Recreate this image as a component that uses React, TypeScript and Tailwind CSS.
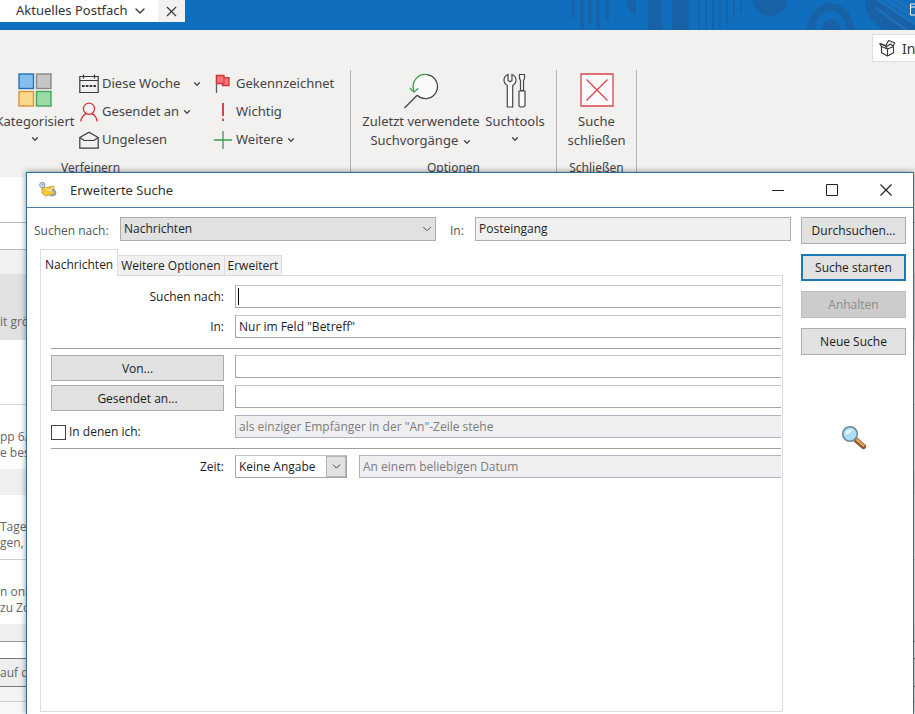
import { useState } from 'react'
import type { ReactNode } from 'react'
import { ChevronDown, X } from 'lucide-react'

/* ── Icons ─────────────────────────────────────── */

function CategoryIcon() {
  return (
    <svg width="34" height="34" viewBox="0 0 34 34" strokeWidth="1.4">
      <rect x="1" y="1" width="14.5" height="14.5" fill="#83beec" stroke="#2372ba" />
      <rect x="18.5" y="1" width="14.5" height="14.5" fill="#c8c6c4" stroke="#8a8886" />
      <rect x="1" y="18.5" width="14.5" height="14.5" fill="#fcd98a" stroke="#dc9434" />
      <rect x="18.5" y="18.5" width="14.5" height="14.5" fill="#9adba5" stroke="#47a35a" />
    </svg>
  )
}

function CalendarIcon() {
  return (
    <svg width="20" height="20" viewBox="0 0 20 20" fill="none" stroke="#3b3a39" strokeWidth="1.2">
      <path d="M.8 2.500h18.400v16H.8zM.8 6.500h18.400M4.500.5v4M15.500.5v4" />
      <path d="M3 12h14" strokeWidth="2" strokeDasharray="2.600 1.200" />
    </svg>
  )
}

function PersonIcon() {
  return (
    <svg width="20" height="20" viewBox="0 0 20 20" fill="none" stroke="#d13438" strokeWidth="1.3">
      <circle cx="10" cy="6.8" r="5.6" />
      <path d="M1.8 19.5c.6-4.2 3-6.7 5.4-7.8M18.2 19.5c-.6-4.2-3-6.7-5.4-7.8" />
    </svg>
  )
}

function EnvelopeIcon() {
  return (
    <svg width="20" height="20" viewBox="0 0 20 20" fill="none" stroke="#3b3a39" strokeWidth="1.2">
      <path d="M.8 7.500 10 2.300l9.200 5.200v10.700H.8z" />
      <path d="M.8 7.500 5 10.500h10l4.200-3" />
    </svg>
  )
}

function FlagIcon() {
  return (
    <svg width="18" height="20" viewBox="0 0 18 20" fill="none">
      <path d="M2.500 1v18" stroke="#605e5c" strokeWidth="1.3" />
      <path d="M2.500 1.500h7.500v2.200h5v7.800H8.500v-2h-6z" fill="#f8747a" stroke="#d13438" strokeWidth="1.300" />
      <path d="M10 3.700v5.800H8.500" stroke="#d13438" />
    </svg>
  )
}

function ImportantIcon() {
  return (
    <svg width="18" height="20" viewBox="0 0 18 20" fill="none" stroke="#d13438" strokeWidth="1.8">
      <path d="M9 1v13M9 16.800v2.200" />
    </svg>
  )
}

function PlusIcon() {
  return (
    <svg width="18" height="20" viewBox="0 0 18 20" fill="none" stroke="#3a9a4c" strokeWidth="1.300">
      <path d="M9 1v18M0 10h18" />
    </svg>
  )
}

function RecentSearchIcon() {
  return (
    <svg width="36" height="36" viewBox="0 0 36 36" fill="none" strokeWidth="1.300">
      <circle cx="22.500" cy="13.500" r="12" fill="#fafafa" />
      <path d="M14.200 22.200A12 12 0 1 0 24 1.600" stroke="#484644" />
      <path d="M25 1.700A12 12 0 0 0 10.900 17.500M7 15l3.900 4.200 4.300-3.700" stroke="#3a9a4c" />
      <path d="M14.200 22.200 1.500 35" stroke="#484644" />
    </svg>
  )
}

function ToolsIcon() {
  return (
    <svg width="24" height="36" viewBox="0 0 24 36" fill="#fafafa" stroke="#484644" strokeWidth="1.200">
      <path d="M5 1.500v6l2 1.300 2-1.300v-6c2.500 1 4 3.200 4 5.600 0 2.500-1.400 4.400-3.300 5.500V34H4.300V12.600C2.400 11.500 1 9.600 1 7.100c0-2.400 1.500-4.600 4-5.600z" />
      <path d="M16.500 1.500h5v4l-1 2v10h-3v-10l-1-2zM16 18h6v14.500c0 2-6 2-6 0z" />
    </svg>
  )
}

function CloseSearchIcon() {
  return (
    <svg width="34" height="34" viewBox="0 0 34 34" fill="#fafafa" stroke="#d9434c" strokeWidth="1.300">
      <path d="M1 1h32v32H1zM6.500 6.500l21 21M27.500 6.500l-21 21" />
    </svg>
  )
}

function BoxIcon() {
  return (
    <svg className="shrink-0" width="17" height="18" viewBox="0 0 17 18" fill="none" stroke="#3b3a39" strokeWidth="1.200" strokeLinejoin="round">
      <path d="M2.500 7.800v6L8.500 17l6-3.200V8M8.500 10v7M8.500 10 2.500 7.500M8.500 10l6-2.500M8.500 10 6.500 7 .8 4.500 2.500 7.800M6.500 7l3.200-5.500L15.800 4l-2.500 4" />
      <path d="M2 4.800l6 2.500L11.500 5l3 2.500" />
    </svg>
  )
}

function DialogIcon() {
  return (
    <svg width="18" height="16" viewBox="0 0 18 16">
      <path d="M3 4.500l3.500 1.300L15 4v8l-8.500 2L3 11z" fill="#f2c83c" stroke="#b98b1a" strokeWidth=".7" />
      <path d="M6.500 6 11 9l4-4.500" fill="none" stroke="#fff3b8" />
      <circle cx="3.300" cy="3" r="2.600" fill="#e4edf7" stroke="#6a86ad" strokeWidth=".9" />
      <path d="M3.300 1.500V3h1.200" fill="none" stroke="#40618f" strokeWidth=".7" />
      <path d="M11 13.500h2.500a2.800 2.800 0 1 0-.5-5.500" fill="none" stroke="#8197c4" strokeWidth="1.700" />
    </svg>
  )
}

function MagnifierIcon() {
  return (
    <svg width="26" height="26" viewBox="0 0 26 26">
      <path d="M14.500 14.500 22.500 21.500" stroke="#8d5428" strokeWidth="5.200" strokeLinecap="round" />
      <path d="M15.500 14.500 22.500 20.500" stroke="#dc9d5b" strokeWidth="2.600" strokeLinecap="round" />
      <circle cx="9" cy="9" r="7.300" fill="#a9def6" stroke="#6f879b" strokeWidth="1.600" />
      <path d="M4 9.500C4.500 5 8 3.500 12 4.500 10 8 7 9.500 4 9.500z" fill="#e3f6fe" />
    </svg>
  )
}

function TitlePattern() {
  return (
    <svg className="absolute inset-y-0 right-0" width="355" height="30" viewBox="0 0 355 30" fill="#1862a8">
      <path d="M12 0h3v18h-3zM20 0h4v30h-4zM28 0h4v24h-4zM36 0h4v30h-4zM45 0h4v20h-4zM66 0h10v16q-8-6-10-16zM88 0h14v30H88zM112 0h17v30h-17z" />
      <path d="M138 0h2v30h-2zM145 0h2v30h-2zM152 0h2v30h-2zM159 0h2v28h-2zM166 0h2v24h-2zM173 0h2v19h-2zM180 0h2v12h-2z" />
      <path d="M192 0h36q-4 16-18 16T192 0z" />
      <path d="M247 30a23.500 27 0 0 1 47 0h-8a15.500 19 0 0 0-31 0zM261 30a10 11 0 0 1 20 0z" />
      <path d="M305 0h11l39 26v4h-32q-18-12-18-30z" />
      <path d="M318 0l37 24M327 0l28 18M336 0l19 12M316 8l30 22" stroke="#2272ba" strokeWidth="2" />
      <path d="M355 4h-4.500v11H355M350.500 7H355" fill="none" stroke="#fff" />
    </svg>
  )
}

/* ── Ribbon ────────────────────────────────────── */

function Chevron({ className = '' }: { className?: string }) {
  return <ChevronDown size={10} strokeWidth={3} className={`inline-block shrink-0 ${className}`} />
}

interface RibbonItemProps {
  icon: ReactNode
  label: string
  menu?: boolean
  wide?: boolean
}

function RibbonItem({ icon, label, menu, wide }: RibbonItemProps) {
  return (
    <button className="flex h-7 items-center whitespace-nowrap">
      <span className="mr-[3px] flex w-5 justify-center">{icon}</span>
      {label}
      {menu && <Chevron className={wide ? 'ml-3' : 'ml-[3px]'} />}
    </button>
  )
}

function GroupLabel({ children }: { children: ReactNode }) {
  return <div className="mt-auto text-center text-[12px] leading-[18px]">{children}</div>
}

function Ribbon() {
  return (
    <div className="flex h-[147px] bg-[#f2f1f0] pt-10 font-['Noto_Sans','Open_Sans',sans-serif] text-[13px] text-[#444]">
      <div className="flex w-[350px] flex-col">
        <div className="flex">
          <button className="-ml-1 flex w-[78px] flex-col items-center pt-[3px] leading-[19px]">
            <CategoryIcon />
            <span className="mt-[5px]">Kategorisiert</span>
            <Chevron className="mt-[3px]" />
          </button>
          <div className="ml-[5px] w-[134px]">
            <RibbonItem icon={<CalendarIcon />} label="Diese Woche" menu wide />
            <RibbonItem icon={<PersonIcon />} label="Gesendet an" menu />
            <RibbonItem icon={<EnvelopeIcon />} label="Ungelesen" />
          </div>
          <div>
            <RibbonItem icon={<FlagIcon />} label="Gekennzeichnet" />
            <RibbonItem icon={<ImportantIcon />} label="Wichtig" />
            <RibbonItem icon={<PlusIcon />} label="Weitere" menu />
          </div>
        </div>
        <div className="mt-auto pl-[61px] text-[12px] leading-[18px]">Verfeinern</div>
      </div>
      <div className="flex w-[206px] flex-col border-l border-[#b5b3b1]">
        <div className="flex gap-1 pl-2.5 leading-[19px]">
          <button className="flex w-[120px] flex-col items-center whitespace-nowrap pt-[3px]">
            <RecentSearchIcon />
            <span className="mt-[3px]">Zuletzt verwendete</span>
            <span>Suchvorgänge <Chevron /></span>
          </button>
          <button className="flex w-[60px] flex-col items-center pt-[3px]">
            <ToolsIcon />
            <span className="mt-[3px]">Suchtools</span>
            <Chevron className="mt-[3px]" />
          </button>
        </div>
        <GroupLabel>Optionen</GroupLabel>
      </div>
      <div className="flex w-[81px] flex-col border-x border-[#b5b3b1]">
        <button className="flex flex-col items-center pt-[3px] leading-[19px]">
          <CloseSearchIcon />
          <span className="mt-[5px]">Suche</span>
          <span>schließen</span>
        </button>
        <GroupLabel>Schließen</GroupLabel>
      </div>
    </div>
  )
}

/* ── Mail list behind the dialog ───────────────── */

function MailList() {
  return (
    <div className="overflow-hidden whitespace-nowrap bg-white font-['Open_Sans','Noto_Sans',sans-serif] text-[12px] leading-4 text-[#666]">
      <div className="h-[46px] border-b border-[#bbb]" />
      <div className="h-[27px] border-b border-[#bbb]" />
      <div className="h-6 bg-[#f1f1f1]" />
      <div className="h-[66px] bg-[#e1e1e1] pt-10">it größ</div>
      <div className="h-[65px] border-b border-[#d5d5d5]" />
      <div className="h-16 pt-6">
        <p>pp 6/</p>
        <p>e best</p>
      </div>
      <div className="h-[26px] bg-[#efefef]" />
      <div className="h-[65px] border-b border-[#d0d0d0] pt-6">
        <p>Tagen</p>
        <p>gen,</p>
      </div>
      <div className="h-16 pt-6">
        <p>n onl</p>
        <p>zu Zo</p>
      </div>
      <div className="h-[18px] border-b border-[#999] bg-[#efefef]" />
      <div className="h-[17px] border-b border-[#777]" />
      <div className="h-7 border-b border-[#777] bg-[#eee] pt-1.5">auf d</div>
      <div className="h-[15px] border-b border-[#ccc] bg-[#f3f3f3]" />
    </div>
  )
}

/* ── Dialog ────────────────────────────────────── */

const FIELD = 'h-[23px] min-w-0 border-y border-l border-[#a5a5a5] border-t-[#c4c4c4] bg-white px-[3px] outline-none'
const FIELD_DISABLED =
  'h-[23px] min-w-0 appearance-none border-y border-l border-[#abb4c2] bg-[#efeff1] px-[3px] text-[#7c7c7c] opacity-100'
const BUTTON = 'border border-[#adadad] bg-[#e1e1e1] text-[#1a1a1a]'
const TABS = ['Nachrichten', 'Weitere Optionen', 'Erweitert']

function SearchPanel() {
  const [term, setTerm] = useState('')
  const row = 'grid h-[23px] grid-cols-[173px_1fr] gap-x-[11px]'

  return (
    <div className="flex flex-col gap-[7px]">
      <div className={row}>
        <label htmlFor="term" className="self-center text-right">Suchen nach:</label>
        <div className="relative flex">
          <input id="term" value={term} onChange={(e) => setTerm(e.target.value)} className={`${FIELD} w-full`} />
          {!term && <span className="pointer-events-none absolute inset-y-[3px] left-[3px] w-px bg-black" />}
        </div>
      </div>
      <div className={row}>
        <label htmlFor="scope" className="self-center text-right">In:</label>
        <select id="scope" className={`${FIELD} appearance-none`}>
          <option>Nur im Feld "Betreff"</option>
        </select>
      </div>
      <hr className="mt-[3px] -mb-px border-[#a0a0a0]" />
      <div className={row}>
        <button className={`${BUTTON} h-[26px] pt-0.5`}>Von...</button>
        <input aria-label="Von" className={FIELD} />
      </div>
      <div className={row}>
        <button className={`${BUTTON} h-[26px] pt-0.5`}>Gesendet an...</button>
        <input aria-label="Gesendet an" className={FIELD} />
      </div>
      <div className={row}>
        <label className="flex h-[34px] items-center gap-[3px]">
          <input type="checkbox" className="size-[15px] appearance-none border border-[#444] bg-white" />
          In denen ich:
        </label>
        <select aria-label="Empfänger" disabled className={FIELD_DISABLED}>
          <option>als einziger Empfänger in der "An"-Zeile stehe</option>
        </select>
      </div>
      <hr className="mt-[3px] -mb-px border-[#a0a0a0]" />
      <div className={row}>
        <label htmlFor="time" className="self-center text-right">Zeit:</label>
        <div className="flex gap-3">
          <div className="relative flex w-[112px]">
            <select id="time" className={`${FIELD} w-full appearance-none border-r`}>
              <option>Keine Angabe</option>
            </select>
            <span className="pointer-events-none absolute inset-y-px right-px flex w-5 items-center justify-center border border-[#b5b5b5] bg-[#e1e1e1]">
              <ChevronDown size={13} strokeWidth={1.5} />
            </span>
          </div>
          <select aria-label="Datum" disabled className={`${FIELD_DISABLED} flex-1`}>
            <option>An einem beliebigen Datum</option>
          </select>
        </div>
      </div>
    </div>
  )
}

function SearchDialog() {
  const [tab, setTab] = useState(0)

  return (
    <div
      role="dialog"
      aria-label="Erweiterte Suche"
      className="absolute top-[172px] right-px bottom-0 left-[26px] flex flex-col border-x border-t border-[#2f6f98] bg-white font-['Open_Sans','Noto_Sans',sans-serif] text-[12px] text-[#1e1e1e] shadow-[0_0_6px_rgba(0,0,0,0.45)]"
    >
      <div className="flex h-[35px] items-center border-b border-[#4f7fa3] pl-3">
        <DialogIcon />
        <h1 className="ml-[13px] flex-1 pt-0.5 font-['Noto_Sans','Open_Sans',sans-serif] text-[13px] text-[#333]">Erweiterte Suche</h1>
        <button aria-label="Minimieren" className="flex w-[54px] justify-center">
          <svg width="12" height="12" stroke="#222"><path d="M0 6.500h12" /></svg>
        </button>
        <button aria-label="Maximieren" className="flex w-[54px] justify-center">
          <svg width="12" height="12" fill="none" stroke="#222"><path d="M.5.5h11v11H.5z" /></svg>
        </button>
        <button aria-label="Schließen" className="flex w-[54px] justify-center">
          <svg width="12" height="12" stroke="#222" strokeWidth="1.200"><path d="M.5.5l11 11M11.500.5l-11 11" /></svg>
        </button>
      </div>

      <div className="flex flex-1 gap-2.5 pt-[9px] pr-[7px] pb-0.5 pl-[7px]">
        <div className="flex min-w-0 flex-1 flex-col">
          <div className="flex h-6">
            <label htmlFor="kind" className="w-[86px] pt-[5px] text-[#555]">Suchen nach:</label>
            <div className="relative flex flex-1">
              <select id="kind" className="w-full appearance-none border border-[#adadad] bg-[#e1e1e1] px-[3px]">
                <option>Nachrichten</option>
              </select>
              <ChevronDown size={14} strokeWidth={1.5} className="pointer-events-none absolute top-[5px] right-[2px] text-[#444]" />
            </div>
            <label htmlFor="folder" className="w-[39px] pt-[5px] pl-3.5 text-[#555]">In:</label>
            <div className="flex flex-1">
              <input id="folder" readOnly value="Posteingang" className="w-full border border-[#b0b0b0] bg-[#f0f0f0] px-[3px]" />
            </div>
          </div>

          <div role="tablist" className="mt-2 ml-1.5 flex items-end">
            {TABS.map((name, i) => (
              <button
                key={name}
                role="tab"
                aria-selected={tab === i}
                onClick={() => setTab(i)}
                className={
                  tab === i
                    ? 'relative -mb-px h-[27px] border border-b-0 border-[#dcdcdc] bg-white px-1 pt-1'
                    : 'h-5 border border-b-0 border-l-0 border-[#dcdcdc] bg-[#f0f0f0] px-[3px]'
                }
              >
                {name}
              </button>
            ))}
          </div>
          <div role="tabpanel" className="mr-2 ml-1.5 flex-1 border border-[#dcdcdc] pt-[9px] pr-px pl-2.5">
            <SearchPanel />
          </div>
        </div>

        <div className="flex w-[105px] flex-col gap-2.5">
          <button className={`${BUTTON} h-[27px]`}>Durchsuchen...</button>
          <button className="h-[27px] border-2 border-[#1c78b4] bg-[#e1e1e1]">Suche starten</button>
          <button disabled className="h-[27px] border border-[#bfbfbf] bg-[#cccccc] text-[#8b8b8b]">Anhalten</button>
          <button className={`${BUTTON} h-[27px]`}>Neue Suche</button>
          <div className="mt-[60px] flex justify-center">
            <MagnifierIcon />
          </div>
        </div>
      </div>
    </div>
  )
}

export default function App() {
  return (
    <div className="relative flex min-h-screen flex-col overflow-hidden bg-[#f7f7f7]">
      <header className="relative flex h-[30px] items-start bg-[#106ebe] font-['Noto_Sans','Open_Sans',sans-serif] text-[13px] text-[#333]">
        <TitlePattern />
        <button className="flex h-[22px] w-[158px] items-center gap-1 bg-white pl-4">
          Aktuelles Postfach
          <ChevronDown size={16} strokeWidth={2} />
        </button>
        <button aria-label="Suche löschen" className="flex h-[22px] w-[27px] items-center justify-center bg-[#f2f1f0]">
          <X size={17} strokeWidth={1.5} />
        </button>
      </header>
      <div className="relative">
        <Ribbon />
        <button className="absolute top-1 right-0 flex h-7 w-[43px] items-center gap-1.5 border border-r-0 border-[#dedede] bg-white pl-1.5 font-['Noto_Sans','Open_Sans',sans-serif] text-[14px] text-[#333]">
          <BoxIcon />
          In
        </button>
      </div>
      <MailList />
      <SearchDialog />
    </div>
  )
}
